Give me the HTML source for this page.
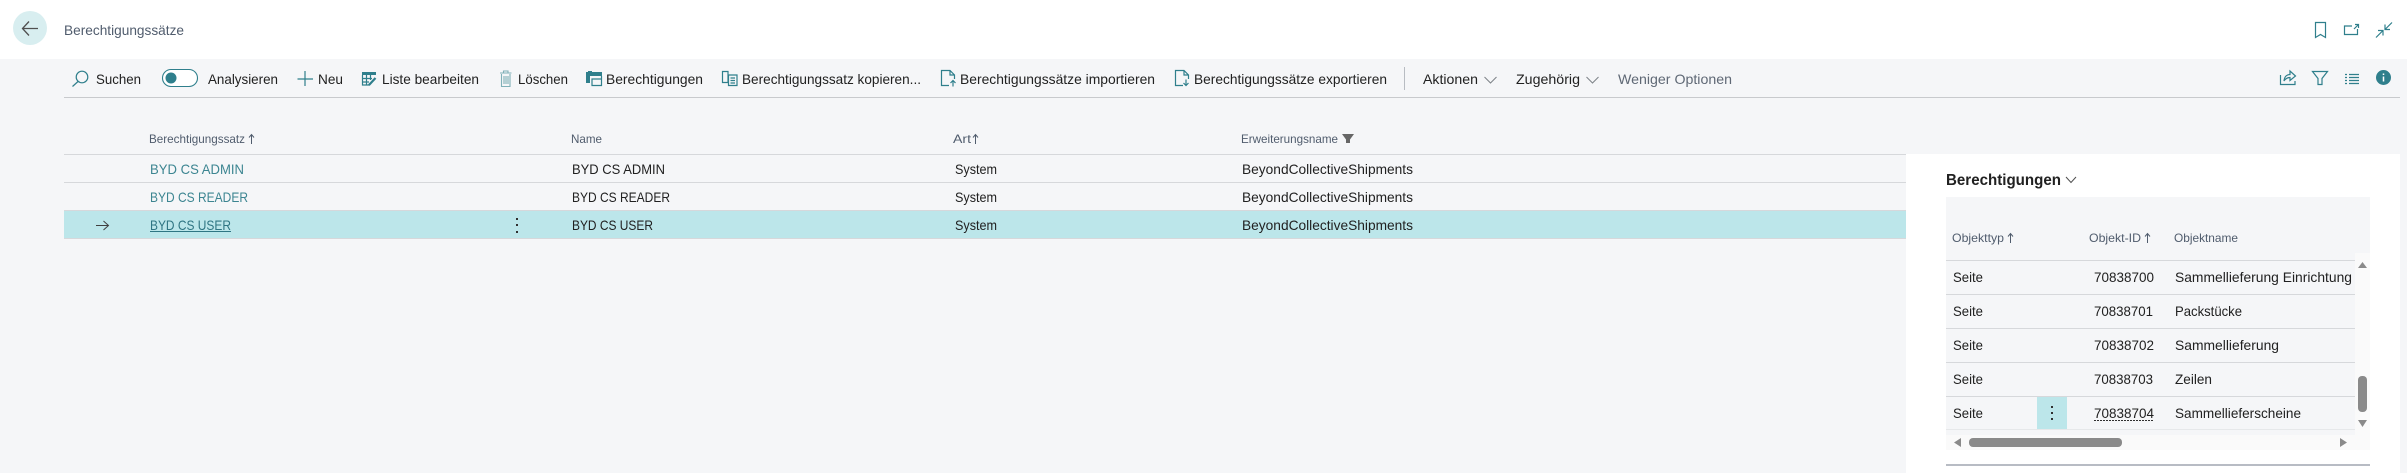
<!DOCTYPE html>
<html lang="de"><head><meta charset="utf-8"><title>Berechtigungssätze</title>
<style>
html,body{margin:0;padding:0;width:2407px;height:473px;overflow:hidden;background:#f5f6f8}
svg{display:block}
text{font-family:"Liberation Sans",sans-serif;font-size:14px;fill:#212121}
.h{font-size:12px;fill:#505c6d}
.l{fill:#3c8591}
.i{fill:none;stroke:#2f7f8c;stroke-width:1.2}
.f{fill:#2f7f8c;stroke:none}
.ln{stroke:#d6d8db;stroke-width:1}
.a{fill:none;stroke:#505c6d;stroke-width:1}
</style></head><body>
<svg width="2407" height="473" viewBox="0 0 2407 473" xmlns="http://www.w3.org/2000/svg">
<rect width="2407" height="473" fill="#f5f6f8"/>
<rect width="2407" height="59" fill="#fff"/>
<!-- back -->
<circle cx="30" cy="28" r="17" fill="#d8eef0"/>
<path d="M23 28.500H38M29 21.500L22.500 28.500L29 35.500" fill="none" stroke="#505050" stroke-width="1.300"/>
<text x="64" y="35" textLength="120" lengthAdjust="spacingAndGlyphs" style="fill:#505c6d">Berechtigungssätze</text>
<!-- top right icons -->
<path class="i" d="M2315.500 22.500H2325.500V37.500L2320.500 34.500L2315.500 37.500Z"/>
<path class="i" d="M2352 26H2344.500V34.500H2357.500V29M2354 29L2358.500 24.500M2355 24.500H2358.500V28"/>
<path class="i" d="M2392 22.500L2385 29.500M2385 24.500V29.500H2390M2376 37.500L2383 30.500M2378 30.500H2383V35.500" stroke-width="1.100"/>
<!-- toolbar -->
<circle class="i" cx="82" cy="77" r="5.800"/><path class="i" d="M78 81.500L72.500 86.500"/>
<text x="96" y="84" textLength="45" lengthAdjust="spacingAndGlyphs">Suchen</text>
<rect x="162.500" y="69.500" width="35" height="17" rx="8.500" fill="#fff" stroke="#2f7f8c" stroke-width="1.100"/><circle cx="171" cy="78" r="5.500" fill="#2f7f8c"/>
<text x="208" y="84" textLength="70" lengthAdjust="spacingAndGlyphs">Analysieren</text>
<path class="i" d="M297.500 79H313M305 71V86"/>
<text x="318" y="84" textLength="25" lengthAdjust="spacingAndGlyphs">Neu</text>
<path class="f" d="M362 72H376V75H362Z"/><path class="i" d="M362.500 75V85H370M362.500 78.500H372M362.500 82H369M366.500 75V85M370.500 75V80"/><path d="M369 85L375.500 78" fill="none" stroke="#2f7f8c" stroke-width="2.200"/>
<text x="382" y="84" textLength="97" lengthAdjust="spacingAndGlyphs">Liste bearbeiten</text>
<path d="M501.500 74V86.500H510V74M500 73H511.500M503.500 73V71H508V73M504 76V84M506 76V84M508 76V84" fill="none" stroke="#7fb0b8" stroke-width="1.100"/>
<text x="518" y="84" textLength="50" lengthAdjust="spacingAndGlyphs">Löschen</text>
<path class="f" d="M586 72H602V76H590V83H586ZM588 71H592V76H588Z"/><path class="i" d="M592 79H601.500V85.500H592ZM601.500 76V79"/>
<text x="606" y="84" textLength="97" lengthAdjust="spacingAndGlyphs">Berechtigungen</text>
<path class="i" d="M722.500 71.500H728V82.500H722.500ZM728.500 75H737V85.500H728.500ZM730.500 78H735M730.500 80.500H735M730.500 83H735"/>
<text x="742" y="84" textLength="179" lengthAdjust="spacingAndGlyphs">Berechtigungssatz kopieren...</text>
<path class="i" d="M949 85.500H941.500V70.500H950L954.500 75V79M950 70.500V75H954.500"/><path class="i" d="M953 86.500V80.500M950.500 83L953 80.500L955.500 83" stroke-width="1.500"/>
<text x="960" y="84" textLength="195" lengthAdjust="spacingAndGlyphs">Berechtigungssätze importieren</text>
<path class="i" d="M1183 85.500H1175.500V70.500H1184L1188.500 75V79M1184 70.500V75H1188.500"/><path class="i" d="M1186 79.500V85.500M1183.500 83L1186 85.500L1188.500 83" stroke-width="1.500"/>
<text x="1194" y="84" textLength="193" lengthAdjust="spacingAndGlyphs">Berechtigungssätze exportieren</text>
<path d="M1404.500 67V90" stroke="#b8bcc2" stroke-width="1"/>
<text x="1423" y="84" textLength="55" lengthAdjust="spacingAndGlyphs">Aktionen</text>
<path d="M1484.500 77L1490.500 83L1496.500 77" fill="none" stroke="#7d8288" stroke-width="1"/>
<text x="1516" y="84" textLength="64" lengthAdjust="spacingAndGlyphs">Zugehörig</text>
<path d="M1586.500 77L1592.500 83L1598.500 77" fill="none" stroke="#7d8288" stroke-width="1"/>
<text x="1618" y="84" textLength="114" lengthAdjust="spacingAndGlyphs" style="fill:#5f6875">Weniger Optionen</text>
<!-- toolbar right -->
<path class="i" d="M2280.500 75V84.500H2295V81M2284 81C2284.500 76 2287.500 74.500 2290 74.500V71L2295.500 76L2290 80.500V77.500C2287.500 77.500 2285.500 78.500 2284 81Z"/>
<path class="i" d="M2312.500 71.500H2327.500L2322 78.500V84.500H2318V78.500Z"/>
<path class="i" d="M2345 74.500H2347M2349 74.500H2359M2345 77.500H2347M2349 77.500H2359M2345 80.500H2347M2349 80.500H2359M2345 83.500H2347M2349 83.500H2359"/>
<circle cx="2383.500" cy="77.500" r="7.500" fill="#2f7f8c"/><path d="M2383.500 76.500V81.500M2383.500 73.500V75" stroke="#fff" stroke-width="1.500"/>
<path d="M64 97.500H2400" stroke="#c8cacd" stroke-width="1"/>
<!-- main list -->
<rect x="64" y="211" width="1842" height="27" fill="#bce6ea"/>
<path class="ln" d="M64 154.500H1906M64 182.500H1906M64 210.500H1906M64 238.500H1906"/>
<text class="h" x="149" y="143" textLength="96" lengthAdjust="spacingAndGlyphs">Berechtigungssatz</text>
<path class="a" d="M251.500 144V135M249 137.500L251.500 134.500L254 137.500"/>
<text class="h" x="571" y="143" textLength="31" lengthAdjust="spacingAndGlyphs">Name</text>
<text class="h" x="953" y="143" textLength="18" lengthAdjust="spacingAndGlyphs">Art</text>
<path class="a" d="M975.500 144V135M973 137.500L975.500 134.500L978 137.500"/>
<text class="h" x="1241" y="143" textLength="97" lengthAdjust="spacingAndGlyphs">Erweiterungsname</text>
<path d="M1342 134H1354L1350 139.500V143H1346V139.500Z" fill="#666"/>
<text class="l" x="150" y="174" textLength="94" lengthAdjust="spacingAndGlyphs">BYD CS ADMIN</text>
<text class="l" x="150" y="202" textLength="98" lengthAdjust="spacingAndGlyphs">BYD CS READER</text>
<text x="150" y="230" textLength="81" lengthAdjust="spacingAndGlyphs" style="fill:#2f7583">BYD CS USER</text>
<path d="M150 231.500H231" stroke="#2f7583" stroke-width="1"/>
<path d="M96 225.500H108M103.500 221L108.500 225.500L103.500 230" fill="none" stroke="#404040" stroke-width="1"/>
<g fill="#303030"><rect x="516" y="218" width="2" height="2"/><rect x="516" y="224" width="2" height="2"/><rect x="516" y="231" width="2" height="2"/></g>
<text x="572" y="174" textLength="93" lengthAdjust="spacingAndGlyphs">BYD CS ADMIN</text>
<text x="572" y="202" textLength="98" lengthAdjust="spacingAndGlyphs">BYD CS READER</text>
<text x="572" y="230" textLength="81" lengthAdjust="spacingAndGlyphs">BYD CS USER</text>
<text x="955" y="174" textLength="42" lengthAdjust="spacingAndGlyphs">System</text>
<text x="955" y="202" textLength="42" lengthAdjust="spacingAndGlyphs">System</text>
<text x="955" y="230" textLength="42" lengthAdjust="spacingAndGlyphs">System</text>
<text x="1242" y="174" textLength="171" lengthAdjust="spacingAndGlyphs">BeyondCollectiveShipments</text>
<text x="1242" y="202" textLength="171" lengthAdjust="spacingAndGlyphs">BeyondCollectiveShipments</text>
<text x="1242" y="230" textLength="171" lengthAdjust="spacingAndGlyphs">BeyondCollectiveShipments</text>
<!-- right panel -->
<rect x="1906" y="154" width="494" height="319" fill="#fff"/>
<text x="1946" y="185" textLength="115" lengthAdjust="spacingAndGlyphs" style="font-size:16px;font-weight:bold;fill:#212121">Berechtigungen</text>
<path d="M2066 177L2071 182.500L2076 177" fill="none" stroke="#505050" stroke-width="1"/>
<rect x="1946" y="197" width="424" height="253" fill="#f5f6f8"/>
<text class="h" x="1952" y="242" textLength="52" lengthAdjust="spacingAndGlyphs">Objekttyp</text>
<path class="a" d="M2010.500 243V234M2008 236.500L2010.500 233.500L2013 236.500"/>
<text class="h" x="2089" y="242" textLength="52" lengthAdjust="spacingAndGlyphs">Objekt-ID</text>
<path class="a" d="M2147.500 243V234M2145 236.500L2147.500 233.500L2150 236.500"/>
<text class="h" x="2174" y="242" textLength="64" lengthAdjust="spacingAndGlyphs">Objektname</text>
<path class="ln" d="M1946 260.500H2355M1946 294.500H2355M1946 328.500H2355M1946 362.500H2355M1946 396.500H2355"/>
<path d="M1946 429.500H2355" stroke="#e6e8ea" stroke-width="1"/>
<rect x="2037" y="397" width="30" height="32" fill="#bce6ea"/>
<g fill="#303030"><rect x="2051" y="406" width="2" height="2"/><rect x="2051" y="412" width="2" height="2"/><rect x="2051" y="418" width="2" height="2"/></g>
<text x="1953" y="282" textLength="30" lengthAdjust="spacingAndGlyphs">Seite</text>
<text x="1953" y="316" textLength="30" lengthAdjust="spacingAndGlyphs">Seite</text>
<text x="1953" y="350" textLength="30" lengthAdjust="spacingAndGlyphs">Seite</text>
<text x="1953" y="384" textLength="30" lengthAdjust="spacingAndGlyphs">Seite</text>
<text x="1953" y="418" textLength="30" lengthAdjust="spacingAndGlyphs">Seite</text>
<text x="2094" y="282" textLength="60" lengthAdjust="spacingAndGlyphs">70838700</text>
<text x="2094" y="316" textLength="59" lengthAdjust="spacingAndGlyphs">70838701</text>
<text x="2094" y="350" textLength="60" lengthAdjust="spacingAndGlyphs">70838702</text>
<text x="2094" y="384" textLength="59" lengthAdjust="spacingAndGlyphs">70838703</text>
<text x="2094" y="418" textLength="60" lengthAdjust="spacingAndGlyphs">70838704</text>
<path d="M2094 420.500H2154" stroke="#303030" stroke-width="1" stroke-dasharray="2 1"/>
<text x="2175" y="282" textLength="177" lengthAdjust="spacingAndGlyphs">Sammellieferung Einrichtung</text>
<text x="2175" y="316" textLength="67" lengthAdjust="spacingAndGlyphs">Packstücke</text>
<text x="2175" y="350" textLength="104" lengthAdjust="spacingAndGlyphs">Sammellieferung</text>
<text x="2175" y="384" textLength="37" lengthAdjust="spacingAndGlyphs">Zeilen</text>
<text x="2175" y="418" textLength="126" lengthAdjust="spacingAndGlyphs">Sammellieferscheine</text>
<!-- scrollbars -->
<rect x="2355" y="253" width="15" height="182" fill="#fafafa"/>
<rect x="1946" y="435" width="424" height="15" fill="#fafafa"/>
<g fill="#8a8a8a">
<path d="M2358 268H2367L2362.500 262Z"/>
<path d="M2358 420H2367L2362.500 427Z"/>
<rect x="2358" y="376" width="9" height="36" rx="4"/>
<path d="M1961 438V447L1954 442.500Z"/>
<path d="M2340 438V447L2347 442.500Z"/>
<rect x="1969" y="438" width="153" height="9" rx="4"/>
</g>
<path d="M1946 465H2370" stroke="#b8bcc4" stroke-width="2"/>
</svg>
</body></html>
